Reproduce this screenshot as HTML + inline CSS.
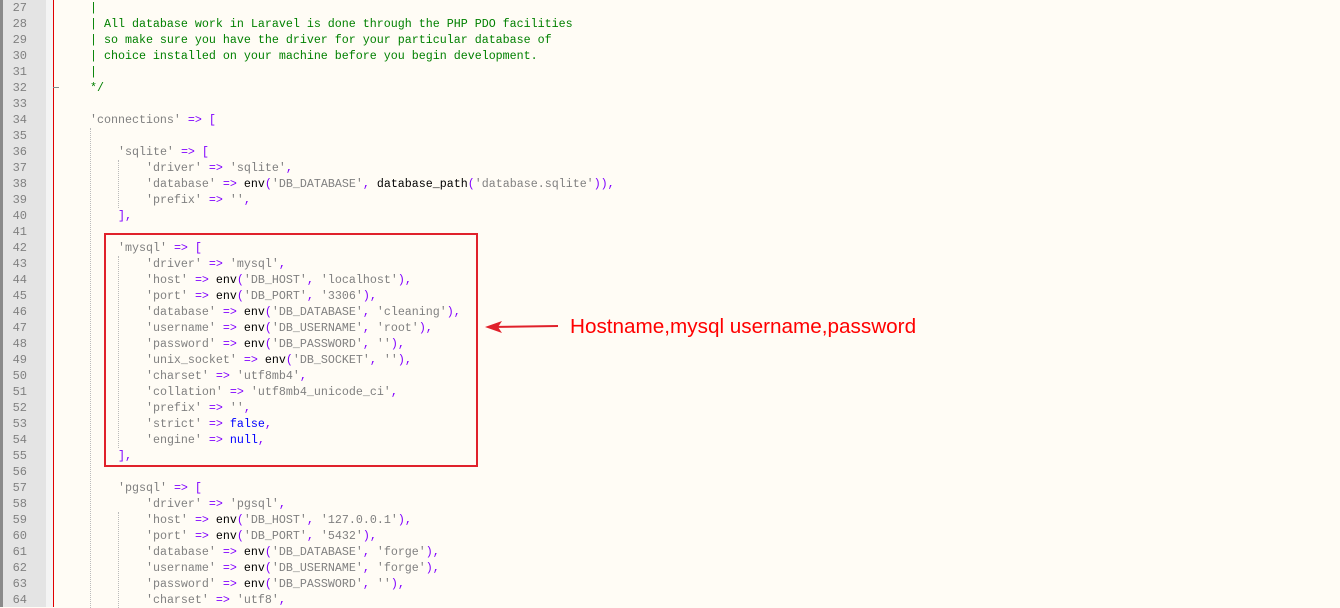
<!DOCTYPE html><html><head><style>
body{margin:0;width:1340px;height:607px;overflow:hidden;background:#fffcf5;position:relative;font-family:"Liberation Mono","Courier New",monospace;font-size:12px}
#g{position:absolute;left:0;top:0;width:46px;height:607px;background:#e4e4e4;border-left:3px solid #8a8a8a;box-sizing:border-box}
#m{position:absolute;left:46px;top:0;width:7px;height:607px;background:#f4f4f4}
#r{position:absolute;left:53px;top:0;width:1px;height:607px;background:#e00000}
.ln{position:absolute;left:0;width:27px;text-align:right;color:#808080;height:16px;line-height:16px}
pre{position:absolute;left:62px;top:0;margin:0;font-family:inherit;font-size:11.67px;line-height:16px;color:#000}
.s{color:#808080}.o{color:#8000ff}.c{color:#008000}.k{color:#0000ff}
.gd{position:absolute;width:0;border-left:1px dotted #bbb}
</style></head><body>
<div id="g"></div><div id="m"></div><div id="r"></div>
<div style="position:absolute;left:53px;top:87px;width:6px;border-top:1px solid #888"></div>
<div class="gd" style="left:90px;top:128px;height:480px"></div>
<div class="gd" style="left:118px;top:160px;height:48px"></div>
<div class="gd" style="left:118px;top:256px;height:192px"></div>
<div class="gd" style="left:118px;top:512px;height:96px"></div>
<pre><span class="c">    |
    | All database work in Laravel is done through the PHP PDO facilities
    | so make sure you have the driver for your particular database of
    | choice installed on your machine before you begin development.
    |
    */</span>

    <span class="s">'connections'</span> <span class="o">=&gt; [</span>

        <span class="s">'sqlite'</span> <span class="o">=&gt; [</span>
            <span class="s">'driver'</span> <span class="o">=&gt;</span> <span class="s">'sqlite'</span><span class="o">,</span>
            <span class="s">'database'</span> <span class="o">=&gt;</span> env<span class="o">(</span><span class="s">'DB_DATABASE'</span><span class="o">,</span> database_path<span class="o">(</span><span class="s">'database.sqlite'</span><span class="o">)),</span>
            <span class="s">'prefix'</span> <span class="o">=&gt;</span> <span class="s">''</span><span class="o">,</span>
        <span class="o">],</span>

        <span class="s">'mysql'</span> <span class="o">=&gt; [</span>
            <span class="s">'driver'</span> <span class="o">=&gt;</span> <span class="s">'mysql'</span><span class="o">,</span>
            <span class="s">'host'</span> <span class="o">=&gt;</span> env<span class="o">(</span><span class="s">'DB_HOST'</span><span class="o">,</span> <span class="s">'localhost'</span><span class="o">),</span>
            <span class="s">'port'</span> <span class="o">=&gt;</span> env<span class="o">(</span><span class="s">'DB_PORT'</span><span class="o">,</span> <span class="s">'3306'</span><span class="o">),</span>
            <span class="s">'database'</span> <span class="o">=&gt;</span> env<span class="o">(</span><span class="s">'DB_DATABASE'</span><span class="o">,</span> <span class="s">'cleaning'</span><span class="o">),</span>
            <span class="s">'username'</span> <span class="o">=&gt;</span> env<span class="o">(</span><span class="s">'DB_USERNAME'</span><span class="o">,</span> <span class="s">'root'</span><span class="o">),</span>
            <span class="s">'password'</span> <span class="o">=&gt;</span> env<span class="o">(</span><span class="s">'DB_PASSWORD'</span><span class="o">,</span> <span class="s">''</span><span class="o">),</span>
            <span class="s">'unix_socket'</span> <span class="o">=&gt;</span> env<span class="o">(</span><span class="s">'DB_SOCKET'</span><span class="o">,</span> <span class="s">''</span><span class="o">),</span>
            <span class="s">'charset'</span> <span class="o">=&gt;</span> <span class="s">'utf8mb4'</span><span class="o">,</span>
            <span class="s">'collation'</span> <span class="o">=&gt;</span> <span class="s">'utf8mb4_unicode_ci'</span><span class="o">,</span>
            <span class="s">'prefix'</span> <span class="o">=&gt;</span> <span class="s">''</span><span class="o">,</span>
            <span class="s">'strict'</span> <span class="o">=&gt;</span> <span class="k">false</span><span class="o">,</span>
            <span class="s">'engine'</span> <span class="o">=&gt;</span> <span class="k">null</span><span class="o">,</span>
        <span class="o">],</span>

        <span class="s">'pgsql'</span> <span class="o">=&gt; [</span>
            <span class="s">'driver'</span> <span class="o">=&gt;</span> <span class="s">'pgsql'</span><span class="o">,</span>
            <span class="s">'host'</span> <span class="o">=&gt;</span> env<span class="o">(</span><span class="s">'DB_HOST'</span><span class="o">,</span> <span class="s">'127.0.0.1'</span><span class="o">),</span>
            <span class="s">'port'</span> <span class="o">=&gt;</span> env<span class="o">(</span><span class="s">'DB_PORT'</span><span class="o">,</span> <span class="s">'5432'</span><span class="o">),</span>
            <span class="s">'database'</span> <span class="o">=&gt;</span> env<span class="o">(</span><span class="s">'DB_DATABASE'</span><span class="o">,</span> <span class="s">'forge'</span><span class="o">),</span>
            <span class="s">'username'</span> <span class="o">=&gt;</span> env<span class="o">(</span><span class="s">'DB_USERNAME'</span><span class="o">,</span> <span class="s">'forge'</span><span class="o">),</span>
            <span class="s">'password'</span> <span class="o">=&gt;</span> env<span class="o">(</span><span class="s">'DB_PASSWORD'</span><span class="o">,</span> <span class="s">''</span><span class="o">),</span>
            <span class="s">'charset'</span> <span class="o">=&gt;</span> <span class="s">'utf8'</span><span class="o">,</span></pre>
<div class="ln" style="top:0">27</div><div class="ln" style="top:16px">28</div><div class="ln" style="top:32px">29</div><div class="ln" style="top:48px">30</div><div class="ln" style="top:64px">31</div><div class="ln" style="top:80px">32</div><div class="ln" style="top:96px">33</div><div class="ln" style="top:112px">34</div><div class="ln" style="top:128px">35</div><div class="ln" style="top:144px">36</div><div class="ln" style="top:160px">37</div><div class="ln" style="top:176px">38</div><div class="ln" style="top:192px">39</div><div class="ln" style="top:208px">40</div><div class="ln" style="top:224px">41</div><div class="ln" style="top:240px">42</div><div class="ln" style="top:256px">43</div><div class="ln" style="top:272px">44</div><div class="ln" style="top:288px">45</div><div class="ln" style="top:304px">46</div><div class="ln" style="top:320px">47</div><div class="ln" style="top:336px">48</div><div class="ln" style="top:352px">49</div><div class="ln" style="top:368px">50</div><div class="ln" style="top:384px">51</div><div class="ln" style="top:400px">52</div><div class="ln" style="top:416px">53</div><div class="ln" style="top:432px">54</div><div class="ln" style="top:448px">55</div><div class="ln" style="top:464px">56</div><div class="ln" style="top:480px">57</div><div class="ln" style="top:496px">58</div><div class="ln" style="top:512px">59</div><div class="ln" style="top:528px">60</div><div class="ln" style="top:544px">61</div><div class="ln" style="top:560px">62</div><div class="ln" style="top:576px">63</div><div class="ln" style="top:592px">64</div>
<div style="position:absolute;left:104px;top:233px;width:374px;height:234px;border:2px solid #e0212b;box-sizing:border-box"></div>
<svg style="position:absolute;left:480px;top:315px" width="90" height="24"><line x1="10" y1="12" x2="78" y2="11" stroke="#e0212b" stroke-width="2"/><path d="M5 12 L22 6 L18 12 L22 18 Z" fill="#e0212b"/></svg>
<div style="position:absolute;left:570px;top:314px;font-family:'Liberation Sans',Arial,sans-serif;font-size:20.7px;color:#f00;line-height:26px">Hostname,mysql username,password</div>
</body></html>
